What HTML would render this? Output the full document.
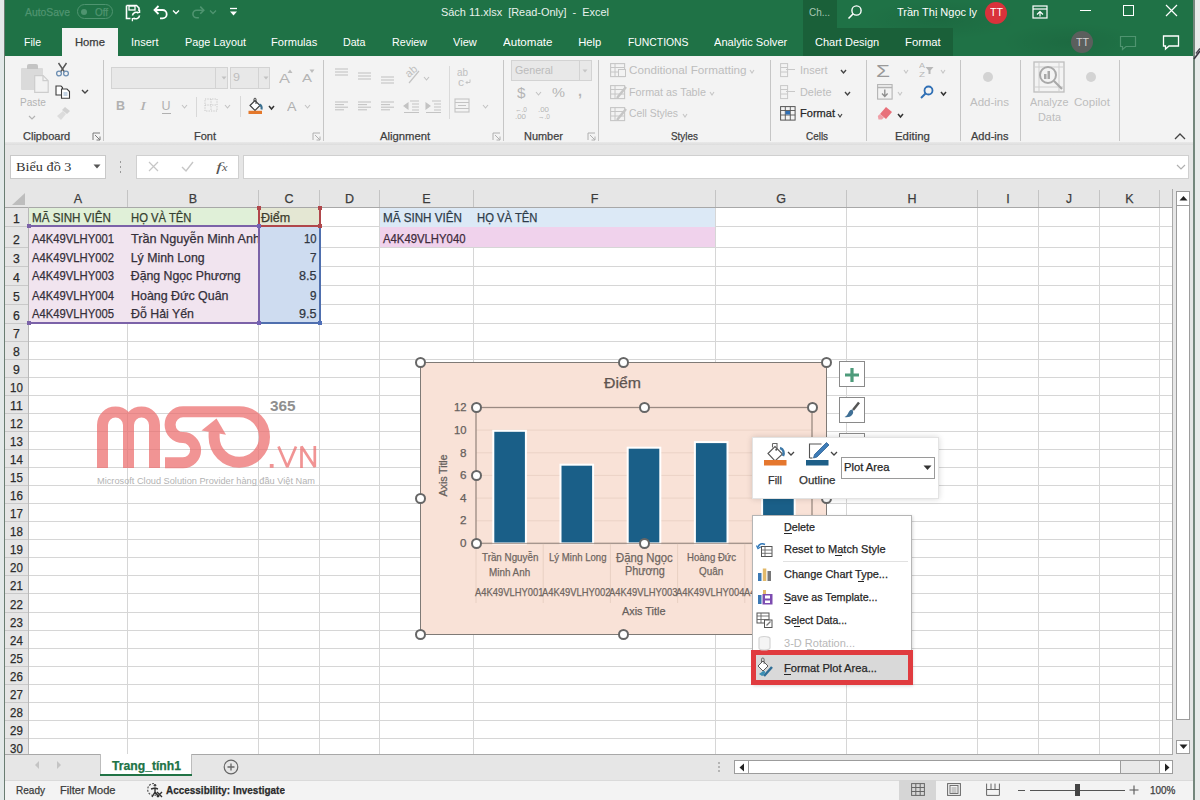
<!DOCTYPE html>
<html><head><meta charset="utf-8">
<style>
*{box-sizing:border-box}
html,body{margin:0;padding:0;width:1200px;height:800px;overflow:hidden;background:#f3f3f3;font-family:"Liberation Sans",sans-serif;color:#262626}
.a{position:absolute}
.t{position:absolute;white-space:nowrap;line-height:1;-webkit-text-stroke:0.25px currentColor}
svg{position:absolute;overflow:visible}
#title{left:5px;top:0;width:1189px;height:56px;background:#1f7246}
.wt{color:#fff;font-size:11.5px}
.rb{font-size:11.3px;color:#a6a6a6}
.gl{font-size:11.3px;color:#3b3b3b}
.sep{position:absolute;width:1px;background:#c8c8c8}
.cell{font-size:13.2px;color:#333;transform-origin:left center}
.hdr{font-size:13px;color:#3a3a3a}
.cm{font-size:11.3px;color:#262626}
</style></head><body>
<div class=a style='left:0;top:0;width:5px;height:800px;background:#e3e9e9'></div>
<div class=a style='left:3.7px;top:0;width:1.4px;height:800px;background:#6a7d72'></div>
<div class=a style='left:1194px;top:0;width:6px;height:800px;background:#e8ebea'></div>
<div class=a style='left:1193px;top:0;width:1.6px;height:800px;background:#74877c'></div>
<div class=a style='left:5px;top:0;width:1188px;height:56px;background:#1f7246'></div>
<div class=a style='left:860px;top:0;width:160px;height:40px;background:radial-gradient(ellipse at center,rgba(0,0,0,.07),rgba(0,0,0,0) 70%)'></div>
<div class=a style='left:1000px;top:22px;width:140px;height:40px;background:radial-gradient(ellipse at center,rgba(0,0,0,.07),rgba(0,0,0,0) 70%)'></div>
<div class=a style='left:803px;top:0;width:34px;height:28px;background:#1a6039'></div>
<div class=a style='left:803px;top:28px;width:150px;height:28px;background:#1a6039'></div>
<div class=t style='left:25.00px;top:6.58px;font-size:11.3px;color:#4f9470;transform:scaleX(0.918);transform-origin:0 0;'>AutoSave</div>
<div class=a style='left:77px;top:4px;width:36px;height:15px;border:1.2px solid #4f9470;border-radius:8px'></div>
<div class=a style='left:81px;top:8.5px;width:6px;height:6px;border-radius:3px;background:#4f9470'></div>
<div class=t style='left:95.00px;top:6.96px;font-size:10.5px;color:#4f9470;transform:scaleX(0.941);transform-origin:0 0;'>Off</div>
<svg style='left:124px;top:3px' width=18 height=18 viewBox='0 0 18 18'>
<path d='M2.5 2.5h10l2.5 2.5v3' fill=none stroke='#fff' stroke-width=1.6 />
<path d='M2.5 2.5v13h4' fill=none stroke='#fff' stroke-width=1.6 />
<rect x=5 y=3 width=6 height=4 fill=none stroke='#fff' stroke-width=1.3 />
<path d='M8.5 12.5a3.5 3.5 0 0 1 6-2.2M15.5 12.5a3.5 3.5 0 0 1-6 2.2' fill=none stroke='#fff' stroke-width=1.6 />
<path d='M13 9.3h2.6V6.8M11 15.7H8.4v2.5' fill=none stroke='#fff' stroke-width=1.3 />
</svg>
<svg style='left:152px;top:4px' width=18 height=16 viewBox='0 0 18 16'>
<path d='M3 6h7.5a4.2 4.2 0 0 1 0 8.4H8' fill=none stroke='#fff' stroke-width=1.8 />
<path d='M6.5 2L2.5 6l4 4' fill=none stroke='#fff' stroke-width=1.8 />
</svg>
<svg style='left:172px;top:9px' width=8 height=6 viewBox='0 0 8 6'><path d='M1 1.5l3 3 3-3' fill=none stroke='#fff' stroke-width=1.3 /></svg>
<svg style='left:190px;top:4px' width=16 height=16 viewBox='0 0 18 16'>
<path d='M15 6H7.5a4.2 4.2 0 0 0 0 8.4H10' fill=none stroke='#4f9470' stroke-width=1.8 />
<path d='M11.5 2l4 4-4 4' fill=none stroke='#4f9470' stroke-width=1.8 />
</svg>
<svg style='left:209px;top:9px' width=8 height=6 viewBox='0 0 8 6'><path d='M1 1.5l3 3 3-3' fill=none stroke='#4f9470' stroke-width=1.3 /></svg>
<svg style='left:229px;top:7px' width=9 height=10 viewBox='0 0 9 10'><path d='M1 1.5h7' stroke='#fff' stroke-width=1.3 /><path d='M1 4.5h7l-3.5 4z' fill='#fff' /></svg>
<div class=t style='left:441.00px;top:7.08px;font-size:11.3px;color:#e8f1ec;transform:scaleX(0.967);transform-origin:0 0;-webkit-text-stroke:0;'>Sách 11.xlsx&nbsp; [Read-Only]&nbsp; -&nbsp; Excel</div>
<div class=t style='left:809.00px;top:7.08px;font-size:11.3px;color:#a9c6b5;transform:scaleX(0.880);transform-origin:0 0;-webkit-text-stroke:0;'>Ch...</div>
<svg style='left:847px;top:4px' width=16 height=16 viewBox='0 0 16 16'><circle cx=9.5 cy=6.5 r=4.6 fill=none stroke='#fff' stroke-width=1.4 /><path d='M6.2 9.8L1.5 14.5' stroke='#fff' stroke-width=1.6 /></svg>
<div class=t style='left:897.00px;top:7.08px;font-size:11.3px;color:#ffffff;transform:scaleX(0.973);transform-origin:0 0;-webkit-text-stroke:0;'>Trần Thị Ngọc ly</div>
<div class=a style='left:985px;top:1.5px;width:22px;height:22px;border-radius:11px;background:#d9323b'></div>
<div class=t style='left:989.50px;top:7.70px;font-size:10px;color:#ffffff;transform:scaleX(1.064);transform-origin:0 0;-webkit-text-stroke:0;'>TT</div>
<svg style='left:1032px;top:5px' width=16 height=14 viewBox='0 0 16 14'><rect x=1 y=1 width=14 height=12 fill=none stroke='#fff' stroke-width=1.2 /><path d='M1 4h14' stroke='#fff' stroke-width=1.2 /><path d='M5 9.5l3-3 3 3M8 6.5v5' fill=none stroke='#fff' stroke-width=1.2 /></svg>
<div class=a style='left:1080px;top:9.5px;width:11px;height:1.2px;background:#fff'></div>
<div class=a style='left:1123px;top:5px;width:11px;height:11px;border:1.2px solid #fff'></div>
<svg style='left:1165px;top:4px' width=13 height=13 viewBox='0 0 13 13'><path d='M1 1l11 11M12 1L1 12' stroke='#fff' stroke-width=1.2 /></svg>
<div class=a style='left:62px;top:28px;width:56px;height:29px;background:#f3f3f3'></div>
<div class=t style='left:24.00px;top:36.92px;font-size:11.2px;color:#ffffff;transform:scaleX(0.943);transform-origin:0 0;-webkit-text-stroke:0;'>File</div>
<div class=t style='left:75.00px;top:36.92px;font-size:11.2px;color:#3b3b3b;transform:scaleX(1.005);transform-origin:0 0;'>Home</div>
<div class=t style='left:131.25px;top:36.92px;font-size:11.2px;color:#ffffff;transform:scaleX(0.983);transform-origin:0 0;-webkit-text-stroke:0;'>Insert</div>
<div class=t style='left:184.50px;top:36.92px;font-size:11.2px;color:#ffffff;transform:scaleX(0.971);transform-origin:0 0;-webkit-text-stroke:0;'>Page Layout</div>
<div class=t style='left:271.25px;top:36.92px;font-size:11.2px;color:#ffffff;transform:scaleX(0.992);transform-origin:0 0;-webkit-text-stroke:0;'>Formulas</div>
<div class=t style='left:343.25px;top:36.92px;font-size:11.2px;color:#ffffff;transform:scaleX(0.952);transform-origin:0 0;-webkit-text-stroke:0;'>Data</div>
<div class=t style='left:392.00px;top:36.92px;font-size:11.2px;color:#ffffff;transform:scaleX(0.954);transform-origin:0 0;-webkit-text-stroke:0;'>Review</div>
<div class=t style='left:452.50px;top:36.92px;font-size:11.2px;color:#ffffff;transform:scaleX(0.988);transform-origin:0 0;-webkit-text-stroke:0;'>View</div>
<div class=t style='left:502.50px;top:36.92px;font-size:11.2px;color:#ffffff;transform:scaleX(1.034);transform-origin:0 0;-webkit-text-stroke:0;'>Automate</div>
<div class=t style='left:578.25px;top:36.92px;font-size:11.2px;color:#ffffff;-webkit-text-stroke:0;'>Help</div>
<div class=t style='left:627.50px;top:36.92px;font-size:11.2px;color:#ffffff;transform:scaleX(0.927);transform-origin:0 0;-webkit-text-stroke:0;'>FUNCTIONS</div>
<div class=t style='left:713.75px;top:36.92px;font-size:11.2px;color:#ffffff;transform:scaleX(0.990);transform-origin:0 0;-webkit-text-stroke:0;'>Analytic Solver</div>
<div class=t style='left:815.00px;top:36.92px;font-size:11.2px;color:#ffffff;transform:scaleX(0.984);transform-origin:0 0;-webkit-text-stroke:0;'>Chart Design</div>
<div class=t style='left:905.00px;top:36.92px;font-size:11.2px;color:#ffffff;transform:scaleX(1.009);transform-origin:0 0;-webkit-text-stroke:0;'>Format</div>
<div class=a style='left:1071px;top:31px;width:22px;height:22px;border-radius:11px;background:#5b5f5d'></div>
<div class=t style='left:1075.50px;top:37.50px;font-size:10px;color:#d0d0d0;transform:scaleX(1.064);transform-origin:0 0;-webkit-text-stroke:0;'>TT</div>
<svg style='left:1119px;top:35px' width=18 height=16 viewBox='0 0 18 16'><path d='M1.5 1.5h15v10H7l-3.5 3v-3h-2z' fill=none stroke='#4f9470' stroke-width=1.2 /></svg>
<svg style='left:1162px;top:34px' width=18 height=17 viewBox='0 0 18 16'><path d='M1.5 1.5h15v10H7l-3.5 3v-3h-2z' fill=none stroke='#fff' stroke-width=1.3 /></svg>
<svg style='left:1193px;top:45px' width=7 height=17 viewBox='0 0 7 17'><path d='M1 14L7 6' stroke='#3a3540' stroke-width=1.6 /><path d='M3 8.5L7 3.5' stroke='#4a4550' stroke-width=1.4 /></svg>
<div class=a style='left:5px;top:56px;width:1188px;height:87px;background:#f3f3f3'></div>
<div class=a style='left:5px;top:142px;width:1188px;height:3px;background:linear-gradient(#e9e9e9,#dcdcdc)'></div>
<div class=a style='left:5px;top:145px;width:1188px;height:44px;background:#e6e6e6'></div>
<div class=sep style='left:103px;top:60px;height:81px;background:#c6c6c6'></div>
<div class=sep style='left:323px;top:60px;height:81px;background:#c6c6c6'></div>
<div class=sep style='left:503px;top:60px;height:81px;background:#c6c6c6'></div>
<div class=sep style='left:598px;top:60px;height:81px;background:#c6c6c6'></div>
<div class=sep style='left:769.5px;top:60px;height:81px;background:#c6c6c6'></div>
<div class=sep style='left:866px;top:60px;height:81px;background:#c6c6c6'></div>
<div class=sep style='left:959.5px;top:60px;height:81px;background:#c6c6c6'></div>
<div class=sep style='left:1019.5px;top:60px;height:81px;background:#c6c6c6'></div>
<div class=sep style='left:1119px;top:60px;height:81px;background:#c6c6c6'></div>
<div class=t style='left:22.50px;top:130.92px;font-size:11.2px;color:#3f3f3f;transform:scaleX(0.986);transform-origin:0 0;'>Clipboard</div>
<div class=t style='left:194.00px;top:130.92px;font-size:11.2px;color:#3f3f3f;transform:scaleX(0.983);transform-origin:0 0;'>Font</div>
<div class=t style='left:380.20px;top:130.92px;font-size:11.2px;color:#3f3f3f;transform:scaleX(1.009);transform-origin:0 0;'>Alignment</div>
<div class=t style='left:523.70px;top:130.92px;font-size:11.2px;color:#3f3f3f;transform:scaleX(0.977);transform-origin:0 0;'>Number</div>
<div class=t style='left:670.80px;top:130.92px;font-size:11.2px;color:#3f3f3f;transform:scaleX(0.883);transform-origin:0 0;'>Styles</div>
<div class=t style='left:806.20px;top:130.92px;font-size:11.2px;color:#3f3f3f;transform:scaleX(0.888);transform-origin:0 0;'>Cells</div>
<div class=t style='left:895.40px;top:130.92px;font-size:11.2px;color:#3f3f3f;transform:scaleX(1.020);transform-origin:0 0;'>Editing</div>
<div class=t style='left:970.50px;top:130.92px;font-size:11.2px;color:#3f3f3f;transform:scaleX(0.986);transform-origin:0 0;'>Add-ins</div>
<svg style='left:91.5px;top:131.5px' width=9 height=9 viewBox='0 0 9 9'><path d='M1 8V1h7' fill=none stroke='#7a7a7a' stroke-width=1 /><path d='M3 3l5 5M4.5 8H8V4.5' fill=none stroke='#7a7a7a' stroke-width=1 /></svg>
<svg style='left:311.5px;top:131.5px' width=9 height=9 viewBox='0 0 9 9'><path d='M1 8V1h7' fill=none stroke='#b0b0b0' stroke-width=1 /><path d='M3 3l5 5M4.5 8H8V4.5' fill=none stroke='#b0b0b0' stroke-width=1 /></svg>
<svg style='left:491.5px;top:131.5px' width=9 height=9 viewBox='0 0 9 9'><path d='M1 8V1h7' fill=none stroke='#b0b0b0' stroke-width=1 /><path d='M3 3l5 5M4.5 8H8V4.5' fill=none stroke='#b0b0b0' stroke-width=1 /></svg>
<svg style='left:586.5px;top:131.5px' width=9 height=9 viewBox='0 0 9 9'><path d='M1 8V1h7' fill=none stroke='#b0b0b0' stroke-width=1 /><path d='M3 3l5 5M4.5 8H8V4.5' fill=none stroke='#b0b0b0' stroke-width=1 /></svg>
<svg style='left:1174px;top:133px' width=12 height=7 viewBox='0 0 12 7'><path d='M1 6l5-5 5 5' fill=none stroke='#444' stroke-width=1.3 /></svg>
<div class=a style='left:21px;top:67.5px;width:22px;height:22px;background:#dadada;border-radius:1px'></div>
<div class=a style='left:27px;top:64px;width:11px;height:5px;background:#c4c4c4;border-radius:2px 2px 0 0'></div>
<svg style='left:33.5px;top:74.5px' width=15 height=18 viewBox='0 0 15 18'><path d='M0.7 0.7h8.5l5 5v11.6H0.7z' fill='#f2f2f2' stroke='#cdcdcd' stroke-width=1.2 /><path d='M9 0.7v5h5' fill=none stroke='#cdcdcd' stroke-width=1.2 /></svg>
<div class=t style='left:19.60px;top:97.38px;font-size:11.3px;color:#b3b3b3;transform:scaleX(0.893);transform-origin:0 0;-webkit-text-stroke:0;'>Paste</div>
<svg style='left:28px;top:115px' width=8 height=5 viewBox='0 0 8 5'><path d='M1 1l3 3 3-3' fill=none stroke='#b3b3b3' stroke-width=1.2 /></svg>
<svg style='left:55px;top:61.5px' width=15 height=15 viewBox='0 0 15 15'><path d='M3.5 1l6 9M11.5 1l-6 9' stroke='#555' stroke-width=1.4 /><circle cx=4 cy=11.5 r=2.4 fill=none stroke='#6d8fb3' stroke-width=1.3 /><circle cx=11 cy=11.5 r=2.4 fill=none stroke='#6d8fb3' stroke-width=1.3 /></svg>
<svg style='left:54.5px;top:84.5px' width=16 height=14 viewBox='0 0 16 14'><path d='M1 1h5l1.5 1.5V10H1z' fill='#fff' stroke='#3c3c3c' stroke-width=1.1 /><path d='M6.5 4h5.5l2.5 2.5V13.3H6.5z' fill='#fff' stroke='#3c3c3c' stroke-width=1.1 /><path d='M8.5 8h4M8.5 10h4' stroke='#7a9cc0' stroke-width=0.9 /></svg>
<svg style='left:80.5px;top:89px' width=8 height=5 viewBox='0 0 8 5'><path d='M1 1l3 3 3-3' fill=none stroke='#444' stroke-width=1.4 /></svg>
<svg style='left:56px;top:106px' width=15 height=14 viewBox='0 0 15 14'><path d='M9 1l5 4-3 3-5-4z' fill='#d2d2d2' /><path d='M7 5l3 3-5 6-4-4z' fill='#dcdcdc' /></svg>
<div class=a style='left:111px;top:67px;width:117px;height:21.5px;background:#e8e8e8;border:1px solid #d3d3d3'></div>
<div class=a style='left:215px;top:68px;width:1px;height:19.5px;background:#d3d3d3'></div>
<div class=a style='left:229.5px;top:67px;width:40.5px;height:21.5px;background:#e8e8e8;border:1px solid #d3d3d3'></div>
<div class=a style='left:257.5px;top:68px;width:1px;height:19.5px;background:#d3d3d3'></div>
<svg style='left:220.5px;top:76px' width=6 height=4 viewBox='0 0 6 4'><path d='M0.5 0.5h5l-2.5 3z' fill='#c2c2c2' /></svg>
<svg style='left:262.5px;top:76px' width=6 height=4 viewBox='0 0 6 4'><path d='M0.5 0.5h5l-2.5 3z' fill='#c2c2c2' /></svg>
<div class=t style='left:232.50px;top:71.98px;font-size:11.5px;color:#bdbdbd;transform:scaleX(1.093);transform-origin:0 0;-webkit-text-stroke:0;'>9</div>
<div class=t style='left:278.50px;top:71.52px;font-size:13.5px;color:#b5b5b5;transform:scaleX(1.220);transform-origin:0 0;-webkit-text-stroke:0;'>A</div>
<div class=t style='left:301.50px;top:72.98px;font-size:11.5px;color:#b5b5b5;transform:scaleX(1.303);transform-origin:0 0;-webkit-text-stroke:0;'>A</div>
<svg style='left:287px;top:68.5px' width=6 height=5 viewBox='0 0 6 5'><path d='M0.5 4h5L3 0.5z' fill='#bdbdbd' /></svg>
<svg style='left:309px;top:69px' width=6 height=5 viewBox='0 0 6 5'><path d='M0.5 0.5h5L3 4z' fill='#bdbdbd' /></svg>
<div class=t style='left:116.00px;top:100.00px;font-size:12.5px;color:#b0b0b0;font-weight:700;-webkit-text-stroke:0;'>B</div>
<div class=t style='left:139.50px;top:100.00px;font-size:12.5px;color:#b0b0b0;font-style:italic;font-family:"Liberation Serif";transform:scaleX(1.438);transform-origin:0 0;-webkit-text-stroke:0;'>I</div>
<div class=t style='left:161.50px;top:99.50px;font-size:12.5px;color:#b0b0b0;-webkit-text-stroke:0;'>U</div>
<div class=a style='left:161.5px;top:113px;width:9px;height:1px;background:#b0b0b0'></div>
<svg style='left:180.5px;top:104px' width=7 height=5 viewBox='0 0 7 5'><path d='M1 1l2.5 3 2.5-3' fill=none stroke='#c2c2c2' stroke-width=1.1 /></svg>
<div class=sep style='left:196px;top:97px;height:20px;background:#d8d8d8'></div>
<svg style='left:204px;top:98px' width=14 height=14 viewBox='0 0 14 14'><rect x=1 y=1 width=12 height=12 fill=none stroke='#c6c6c6' stroke-width=1 stroke-dasharray='1.2 1.2' /><path d='M7 1v12M1 7h12' stroke='#c6c6c6' stroke-width=1 stroke-dasharray='1.2 1.2' /></svg>
<svg style='left:223.5px;top:104px' width=7 height=5 viewBox='0 0 7 5'><path d='M1 1l2.5 3 2.5-3' fill=none stroke='#c2c2c2' stroke-width=1.1 /></svg>
<div class=sep style='left:239.5px;top:96px;height:21px;background:#d8d8d8'></div>
<svg style='left:247px;top:98px' width=16 height=17 viewBox='0 0 16 17'><path d='M3 7.5l5-5 5 5-5 5z' fill='#fff' stroke='#3c3c3c' stroke-width=1.1 /><path d='M7 3.5V1.2a1 1 0 0 1 2 0V6' fill=none stroke='#3c3c3c' stroke-width=1 /><path d='M12.5 6.5c2 1 2.5 3 2 5' fill=none stroke='#3b6f8f' stroke-width=2 /><rect x=1.5 y=12.8 width=13.5 height=3.2 fill='#e4782b' /></svg>
<svg style='left:267.5px;top:105px' width=7 height=5 viewBox='0 0 7 5'><path d='M1 1l2.5 3 2.5-3' fill=none stroke='#333' stroke-width=1.5 /></svg>
<div class=t style='left:287.00px;top:99.76px;font-size:13px;color:#b0b0b0;transform:scaleX(1.095);transform-origin:0 0;-webkit-text-stroke:0;'>A</div>
<svg style='left:303.5px;top:104px' width=7 height=5 viewBox='0 0 7 5'><path d='M1 1l2.5 3 2.5-3' fill=none stroke='#c2c2c2' stroke-width=1.1 /></svg>
<svg style='left:334.5px;top:68px' width=14 height=11 viewBox='0 0 14 11'><path d='M0 1h13' stroke='#c3c3c3' stroke-width=1.1 /><path d='M0 4h13' stroke='#c3c3c3' stroke-width=1.1 /><path d='M0 7h13' stroke='#c3c3c3' stroke-width=1.1 /></svg>
<svg style='left:357.5px;top:72px' width=14 height=11 viewBox='0 0 14 11'><path d='M0 1h13' stroke='#c3c3c3' stroke-width=1.1 /><path d='M0 4h13' stroke='#c3c3c3' stroke-width=1.1 /><path d='M0 7h13' stroke='#c3c3c3' stroke-width=1.1 /></svg>
<svg style='left:380.5px;top:76px' width=14 height=11 viewBox='0 0 14 11'><path d='M0 1h13' stroke='#c3c3c3' stroke-width=1.1 /><path d='M0 4h13' stroke='#c3c3c3' stroke-width=1.1 /><path d='M0 7h13' stroke='#c3c3c3' stroke-width=1.1 /></svg>
<div class=t style='left:403.00px;top:70.72px;font-size:11px;color:#c0c0c0;transform:scaleX(0.898);transform-origin:0 0;-webkit-text-stroke:0;transform:rotate(-40deg) scaleX(1);'>ab</div>
<svg style='left:405px;top:69px' width=16 height=16 viewBox='0 0 16 16'><path d='M14 2L4 14' stroke='#c3c3c3' stroke-width=1.2 /></svg>
<svg style='left:423px;top:76px' width=7 height=5 viewBox='0 0 7 5'><path d='M1 1l2.5 3 2.5-3' fill=none stroke='#c2c2c2' stroke-width=1.1 /></svg>
<svg style='left:334.5px;top:101px' width=14 height=12.4 viewBox='0 0 14 12.4'><path d='M0 1.0h13' stroke='#c3c3c3' stroke-width=1.1 /><path d='M0 3.6h9' stroke='#c3c3c3' stroke-width=1.1 /><path d='M0 6.2h13' stroke='#c3c3c3' stroke-width=1.1 /><path d='M0 8.8h9' stroke='#c3c3c3' stroke-width=1.1 /></svg>
<svg style='left:357.5px;top:101px' width=14 height=12.4 viewBox='0 0 14 12.4'><path d='M0 1.0h13' stroke='#c3c3c3' stroke-width=1.1 /><path d='M0 3.6h9' stroke='#c3c3c3' stroke-width=1.1 /><path d='M0 6.2h13' stroke='#c3c3c3' stroke-width=1.1 /><path d='M0 8.8h9' stroke='#c3c3c3' stroke-width=1.1 /></svg>
<svg style='left:380.5px;top:101px' width=14 height=12.4 viewBox='0 0 14 12.4'><path d='M0 1.0h13' stroke='#c3c3c3' stroke-width=1.1 /><path d='M0 3.6h9' stroke='#c3c3c3' stroke-width=1.1 /><path d='M0 6.2h13' stroke='#c3c3c3' stroke-width=1.1 /><path d='M0 8.8h9' stroke='#c3c3c3' stroke-width=1.1 /></svg>
<svg style='left:403px;top:100px' width=16 height=13 viewBox='0 0 16 13'><path d='M7 1h9M9 4h7M9 7h7M9 10h7M1 12.5h15M1 6l4-3v6z' stroke='#c3c3c3' stroke-width=1.1 fill='#c3c3c3' /></svg>
<svg style='left:425px;top:100px' width=16 height=13 viewBox='0 0 16 13'><path d='M7 1h9M9 4h7M9 7h7M9 10h7M1 12.5h15M5 6L1 3v6z' stroke='#c3c3c3' stroke-width=1.1 fill='#c3c3c3' /></svg>
<div class=sep style='left:448.5px;top:66px;height:53px;background:#dadada'></div>
<div class=t style='left:456.50px;top:67.46px;font-size:10.5px;color:#c0c0c0;transform:scaleX(0.941);transform-origin:0 0;-webkit-text-stroke:0;'>ab</div>
<div class=t style='left:458.00px;top:76.96px;font-size:10.5px;color:#c0c0c0;transform:scaleX(1.143);transform-origin:0 0;-webkit-text-stroke:0;'>c</div>
<svg style='left:465px;top:79px' width=6 height=6 viewBox='0 0 6 6'><path d='M5 0.5v3H1M2.5 2l-1.5 1.5 1.5 1.5' fill=none stroke='#c0c0c0' stroke-width=0.9 /></svg>
<svg style='left:454px;top:98px' width=16 height=15 viewBox='0 0 16 15'><rect x=1 y=1 width=14 height=13 fill=none stroke='#c3c3c3' stroke-width=1.1 /><path d='M1 4.5h14M1 10.5h14M4 7.5h8' stroke='#c3c3c3' stroke-width=1.1 /></svg>
<svg style='left:481.5px;top:104px' width=7 height=5 viewBox='0 0 7 5'><path d='M1 1l2.5 3 2.5-3' fill=none stroke='#c2c2c2' stroke-width=1.1 /></svg>
<div class=a style='left:511px;top:59.5px;width:80.5px;height:21px;background:#e8e8e8;border:1px solid #d3d3d3'></div>
<div class=a style='left:578.5px;top:60.5px;width:1px;height:19px;background:#d3d3d3'></div>
<svg style='left:582px;top:68.5px' width=6 height=4 viewBox='0 0 6 4'><path d='M0.5 0.5h5l-2.5 3z' fill='#c6c6c6' /></svg>
<div class=t style='left:514.50px;top:65.08px;font-size:11.3px;color:#bcbcbc;transform:scaleX(0.945);transform-origin:0 0;-webkit-text-stroke:0;'>General</div>
<div class=t style='left:516.50px;top:85.78px;font-size:14px;color:#b5b5b5;transform:scaleX(1.090);transform-origin:0 0;-webkit-text-stroke:0;'>$</div>
<svg style='left:534.5px;top:91px' width=7 height=5 viewBox='0 0 7 5'><path d='M1 1l2.5 3 2.5-3' fill=none stroke='#c2c2c2' stroke-width=1.1 /></svg>
<div class=t style='left:552.00px;top:86.02px;font-size:13.5px;color:#b5b5b5;transform:scaleX(1.082);transform-origin:0 0;-webkit-text-stroke:0;'>%</div>
<div class=t style='left:578.00px;top:84.28px;font-size:14px;color:#b5b5b5;font-weight:700;transform:scaleX(1.028);transform-origin:0 0;-webkit-text-stroke:0;'>,</div>
<div class=t style='left:514.50px;top:106.40px;font-size:7.5px;color:#b5b5b5;transform:scaleX(0.872);transform-origin:0 0;-webkit-text-stroke:0;'>←.0</div>
<div class=t style='left:515.00px;top:113.40px;font-size:7.5px;color:#b5b5b5;transform:scaleX(1.054);transform-origin:0 0;-webkit-text-stroke:0;'>.00</div>
<div class=t style='left:538.00px;top:106.40px;font-size:7.5px;color:#b5b5b5;transform:scaleX(1.054);transform-origin:0 0;-webkit-text-stroke:0;'>.00</div>
<div class=t style='left:537.50px;top:113.40px;font-size:7.5px;color:#b5b5b5;transform:scaleX(0.872);transform-origin:0 0;-webkit-text-stroke:0;'>→.0</div>
<svg style='left:609.5px;top:62.5px' width=16 height=15 viewBox='0 0 16 15'><rect x=0.6 y=0.6 width=14 height=13 fill=none stroke='#c6c6c6' stroke-width=1.1 /><path d='M0.6 4.5h14M0.6 9h14M5 0.6v13' stroke='#c6c6c6' stroke-width=1 /></svg>
<div class=a style='left:618px;top:69px;width:8px;height:8px;background:#f3f3f3;border:1px solid #c6c6c6'></div>
<svg style='left:609.5px;top:84.5px' width=16 height=15 viewBox='0 0 16 15'><rect x=0.6 y=0.6 width=14 height=13 fill=none stroke='#c6c6c6' stroke-width=1.1 /><path d='M0.6 4.5h14M0.6 9h14M5 0.6v13' stroke='#c6c6c6' stroke-width=1 /></svg>
<svg style='left:614px;top:86px' width=13 height=14 viewBox='0 0 13 14'><path d='M12 1L3 12' stroke='#c6c6c6' stroke-width=2.5 /></svg>
<svg style='left:609.5px;top:106.5px' width=16 height=15 viewBox='0 0 16 15'><rect x=0.6 y=0.6 width=14 height=13 fill=none stroke='#c6c6c6' stroke-width=1.1 /><path d='M0.6 4.5h14M0.6 9h14M5 0.6v13' stroke='#c6c6c6' stroke-width=1 /></svg>
<svg style='left:614px;top:108px' width=13 height=14 viewBox='0 0 13 14'><path d='M12 1L3 12' stroke='#c6c6c6' stroke-width=2.5 /></svg>
<div class=t style='left:628.50px;top:64.98px;font-size:11.5px;color:#bdbdbd;transform:scaleX(1.016);transform-origin:0 0;-webkit-text-stroke:0;'>Conditional Formatting</div>
<svg style='left:748.5px;top:69px' width=6 height=5 viewBox='0 0 6 5'><path d='M1 1l2.0 3 2.0-3' fill=none stroke='#c6c6c6' stroke-width=1.1 /></svg>
<div class=t style='left:628.80px;top:86.98px;font-size:11.5px;color:#bdbdbd;transform:scaleX(0.936);transform-origin:0 0;-webkit-text-stroke:0;'>Format as Table</div>
<svg style='left:709px;top:91px' width=6 height=5 viewBox='0 0 6 5'><path d='M1 1l2.0 3 2.0-3' fill=none stroke='#c6c6c6' stroke-width=1.1 /></svg>
<div class=t style='left:628.80px;top:108.48px;font-size:11.5px;color:#bdbdbd;transform:scaleX(0.902);transform-origin:0 0;-webkit-text-stroke:0;'>Cell Styles</div>
<svg style='left:681.5px;top:112.5px' width=6 height=5 viewBox='0 0 6 5'><path d='M1 1l2.0 3 2.0-3' fill=none stroke='#c6c6c6' stroke-width=1.1 /></svg>
<svg style='left:780px;top:62.5px' width=16 height=15 viewBox='0 0 16 15'><rect x=0.6 y=0.6 width=7 height=13 fill=none stroke='#c8c8c8' stroke-width=1 /><path d='M0.6 4.5h7M0.6 9h7M6 6.5h9' stroke='#c8c8c8' stroke-width=1 /></svg>
<svg style='left:780px;top:84.5px' width=16 height=15 viewBox='0 0 16 15'><rect x=0.6 y=0.6 width=7 height=13 fill=none stroke='#c8c8c8' stroke-width=1 /><path d='M0.6 4.5h7M0.6 9h7M6 6.5h9' stroke='#c8c8c8' stroke-width=1 /></svg>
<div class=t style='left:799.50px;top:64.98px;font-size:11.5px;color:#bdbdbd;transform:scaleX(0.956);transform-origin:0 0;-webkit-text-stroke:0;'>Insert</div>
<svg style='left:839.5px;top:68.5px' width=7 height=5 viewBox='0 0 7 5'><path d='M1 1l2.5 3 2.5-3' fill=none stroke='#444' stroke-width=1.4 /></svg>
<div class=t style='left:799.50px;top:86.98px;font-size:11.5px;color:#bdbdbd;transform:scaleX(0.947);transform-origin:0 0;-webkit-text-stroke:0;'>Delete</div>
<svg style='left:843.5px;top:90.5px' width=7 height=5 viewBox='0 0 7 5'><path d='M1 1l2.5 3 2.5-3' fill=none stroke='#444' stroke-width=1.4 /></svg>
<svg style='left:780px;top:105px' width=16 height=16 viewBox='0 0 16 16'><rect x=0.6 y=1.6 width=14.5 height=13.5 fill=none stroke='#555' stroke-width=1 /><path d='M0.6 5.5h14.5M0.6 10h14.5M5.3 1.6v13.5M10.3 1.6v13.5' stroke='#555' stroke-width=0.9 /><rect x=5.5 y=6 width=4.5 height=3.5 fill='#2f6fb5' /></svg>
<div class=t style='left:799.50px;top:108.48px;font-size:11.5px;color:#262626;transform:scaleX(0.961);transform-origin:0 0;'>Format</div>
<svg style='left:837px;top:112.5px' width=6 height=5 viewBox='0 0 6 5'><path d='M1 1l2.0 3 2.0-3' fill=none stroke='#444' stroke-width=1.2 /></svg>
<div class=t style='left:876.00px;top:63.34px;font-size:17px;color:#9a9a9a;transform:scaleX(1.331);transform-origin:0 0;-webkit-text-stroke:0;'>Σ</div>
<svg style='left:903px;top:69px' width=6 height=5 viewBox='0 0 6 5'><path d='M1 1l2.0 3 2.0-3' fill=none stroke='#c6c6c6' stroke-width=1.1 /></svg>
<div class=t style='left:918.50px;top:62.40px;font-size:7.5px;color:#b8b8b8;transform:scaleX(1.196);transform-origin:0 0;-webkit-text-stroke:0;'>A</div>
<div class=t style='left:918.50px;top:70.90px;font-size:7.5px;color:#b8b8b8;transform:scaleX(1.306);transform-origin:0 0;-webkit-text-stroke:0;'>Z</div>
<svg style='left:925px;top:66px' width=9 height=9 viewBox='0 0 9 9'><path d='M0.5 1h8L5.5 4.5V8h-2V4.5z' fill='#b8b8b8' /></svg>
<svg style='left:940px;top:69px' width=6 height=5 viewBox='0 0 6 5'><path d='M1 1l2.0 3 2.0-3' fill=none stroke='#c6c6c6' stroke-width=1.1 /></svg>
<svg style='left:877px;top:84px' width=16 height=16 viewBox='0 0 16 16'><rect x=0.6 y=0.6 width=14.5 height=14.5 fill=none stroke='#b3b3b3' stroke-width=1.1 /><path d='M0.6 3.5h14.5' stroke='#b3b3b3' stroke-width=1.5 /><path d='M7.8 5.5v7M5 9.5l2.8 3 2.8-3' fill=none stroke='#8d8d8d' stroke-width=1.3 /></svg>
<svg style='left:897px;top:91px' width=6 height=5 viewBox='0 0 6 5'><path d='M1 1l2.0 3 2.0-3' fill=none stroke='#c6c6c6' stroke-width=1.1 /></svg>
<svg style='left:920px;top:85px' width=14 height=14 viewBox='0 0 14 14'><circle cx=8.5 cy=5.5 r=4 fill=none stroke='#2f6fb5' stroke-width=1.8 /><path d='M5.5 8.5L1 13' stroke='#2f6fb5' stroke-width=2 /></svg>
<svg style='left:939.5px;top:91px' width=7 height=5 viewBox='0 0 7 5'><path d='M1 1l2.5 3 2.5-3' fill=none stroke='#333' stroke-width=1.5 /></svg>
<svg style='left:877px;top:106px' width=16 height=14 viewBox='0 0 16 14'><path d='M9 1l6 5-6 7-6-5z' fill='#e8707a' /><path d='M3 8l4 3.5-2 2H1.5L0.8 10z' fill='#f0a0a8' /></svg>
<svg style='left:897px;top:112.5px' width=7 height=5 viewBox='0 0 7 5'><path d='M1 1l2.5 3 2.5-3' fill=none stroke='#333' stroke-width=1.5 /></svg>
<div class=a style='left:983px;top:72px;width:10px;height:10px;border-radius:5px;background:#d3d3d3'></div>
<div class=t style='left:970.00px;top:97.48px;font-size:11.5px;color:#bdbdbd;-webkit-text-stroke:0;'>Add-ins</div>
<svg style='left:1033px;top:61px' width=32 height=32 viewBox='0 0 32 32'><rect x=1 y=1 width=30 height=30 fill='#f3f3f3' stroke='#bdbdbd' stroke-width=1.3 /><path d='M1 6h30M1 26h30M6 1v30M26 1v30' stroke='#cfcfcf' stroke-width=1 /><circle cx=15 cy=14 r=8 fill='#f3f3f3' stroke='#a9a9a9' stroke-width=2 /><rect x=11 y=13 width=2.5 height=5 fill='#a9a9a9' /><rect x=14.5 y=10 width=2.5 height=8 fill='#a9a9a9' /><path d='M21 20l8 8' stroke='#a9a9a9' stroke-width=2.2 /></svg>
<div class=t style='left:1029.50px;top:97.48px;font-size:11.5px;color:#bdbdbd;transform:scaleX(0.941);transform-origin:0 0;-webkit-text-stroke:0;'>Analyze</div>
<div class=t style='left:1037.50px;top:112.48px;font-size:11.5px;color:#bdbdbd;transform:scaleX(0.947);transform-origin:0 0;-webkit-text-stroke:0;'>Data</div>
<div class=a style='left:1086px;top:72px;width:10px;height:10px;border-radius:5px;background:#d3d3d3'></div>
<div class=t style='left:1074.00px;top:97.48px;font-size:11.5px;color:#bdbdbd;transform:scaleX(1.005);transform-origin:0 0;-webkit-text-stroke:0;'>Copilot</div>
<div class=a style='left:10px;top:154.5px;width:95.5px;height:24.5px;background:#fff;border:1px solid #c9c9c9'></div>
<div class=t style='left:15.80px;top:160.02px;font-size:13.5px;color:#333;font-family:"Liberation Serif";transform:scaleX(1.057);transform-origin:0 0;-webkit-text-stroke:0;'>Biểu đồ 3</div>
<svg style='left:93px;top:163.5px' width=8 height=5 viewBox='0 0 8 5'><path d='M0.5 0.5h7L4 4.5z' fill='#555' /></svg>
<div class=a style='left:119.5px;top:161px;width:1.5px;height:1.5px;background:#9a9a9a'></div>
<div class=a style='left:119.5px;top:166px;width:1.5px;height:1.5px;background:#9a9a9a'></div>
<div class=a style='left:119.5px;top:171px;width:1.5px;height:1.5px;background:#9a9a9a'></div>
<div class=a style='left:135.5px;top:154.5px;width:103px;height:24.5px;background:#fff;border:1px solid #d0d0d0'></div>
<svg style='left:147.5px;top:161px' width=11 height=11 viewBox='0 0 11 11'><path d='M1 1l9 9M10 1L1 10' stroke='#c6c6c6' stroke-width=1.2 /></svg>
<svg style='left:181px;top:161px' width=13 height=11 viewBox='0 0 13 11'><path d='M1 6l4 4 7-9' fill=none stroke='#c6c6c6' stroke-width=1.4 /></svg>
<div class=t style='left:216.00px;top:160.26px;font-size:13px;color:#555;font-style:italic;font-family:"Liberation Serif";transform:scaleX(1.655);transform-origin:0 0;-webkit-text-stroke:0;'>f</div>
<div class=t style='left:221.50px;top:163.94px;font-size:9.5px;color:#555;font-style:italic;font-family:"Liberation Serif";transform:scaleX(1.304);transform-origin:0 0;-webkit-text-stroke:0;'>x</div>
<div class=a style='left:242.5px;top:154.5px;width:946px;height:24.5px;background:#fff;border:1px solid #d0d0d0'></div>
<svg style='left:1176px;top:164px' width=10 height=6 viewBox='0 0 10 6'><path d='M1 1l4 4 4-4' fill=none stroke='#b0b0b0' stroke-width=1.2 /></svg>
<div class=a style='left:5px;top:189px;width:1188px;height:565px;background:#fff'></div>
<div class=a style='left:5px;top:189px;width:1168px;height:18px;background:#e6e6e6'></div>
<div class=a style='left:5px;top:207px;width:23px;height:547px;background:#e6e6e6'></div>
<svg style='left:10px;top:192px' width=16 height=14 viewBox='0 0 16 14'><path d='M15 1v12H2z' fill='#bdbdbd' /></svg>
<svg style='left:0;top:0' width=1200 height=800 viewBox='0 0 1200 800'><path d='M28 226.5H1173' stroke='#d6d6d6' stroke-width=1 /><path d='M28 247.5H1173' stroke='#d6d6d6' stroke-width=1 /><path d='M28 266.5H1173' stroke='#d6d6d6' stroke-width=1 /><path d='M28 285.5H1173' stroke='#d6d6d6' stroke-width=1 /><path d='M28 304.5H1173' stroke='#d6d6d6' stroke-width=1 /><path d='M28 323.5H1173' stroke='#d6d6d6' stroke-width=1 /><path d='M28 341.5H1173' stroke='#d6d6d6' stroke-width=1 /><path d='M28 359.5H1173' stroke='#d6d6d6' stroke-width=1 /><path d='M28 377.5H1173' stroke='#d6d6d6' stroke-width=1 /><path d='M28 395.5H1173' stroke='#d6d6d6' stroke-width=1 /><path d='M28 413.5H1173' stroke='#d6d6d6' stroke-width=1 /><path d='M28 431.5H1173' stroke='#d6d6d6' stroke-width=1 /><path d='M28 449.5H1173' stroke='#d6d6d6' stroke-width=1 /><path d='M28 467.5H1173' stroke='#d6d6d6' stroke-width=1 /><path d='M28 485.5H1173' stroke='#d6d6d6' stroke-width=1 /><path d='M28 503.5H1173' stroke='#d6d6d6' stroke-width=1 /><path d='M28 521.5H1173' stroke='#d6d6d6' stroke-width=1 /><path d='M28 539.5H1173' stroke='#d6d6d6' stroke-width=1 /><path d='M28 557.5H1173' stroke='#d6d6d6' stroke-width=1 /><path d='M28 575.5H1173' stroke='#d6d6d6' stroke-width=1 /><path d='M28 593.5H1173' stroke='#d6d6d6' stroke-width=1 /><path d='M28 612.5H1173' stroke='#d6d6d6' stroke-width=1 /><path d='M28 630.5H1173' stroke='#d6d6d6' stroke-width=1 /><path d='M28 648.5H1173' stroke='#d6d6d6' stroke-width=1 /><path d='M28 666.5H1173' stroke='#d6d6d6' stroke-width=1 /><path d='M28 684.5H1173' stroke='#d6d6d6' stroke-width=1 /><path d='M28 702.5H1173' stroke='#d6d6d6' stroke-width=1 /><path d='M28 720.5H1173' stroke='#d6d6d6' stroke-width=1 /><path d='M28 738.5H1173' stroke='#d6d6d6' stroke-width=1 /><path d='M127.5 207V754' stroke='#d6d6d6' stroke-width=1 /><path d='M258.5 207V754' stroke='#d6d6d6' stroke-width=1 /><path d='M319.5 207V754' stroke='#d6d6d6' stroke-width=1 /><path d='M379.5 207V754' stroke='#d6d6d6' stroke-width=1 /><path d='M473.5 207V754' stroke='#d6d6d6' stroke-width=1 /><path d='M715.5 207V754' stroke='#d6d6d6' stroke-width=1 /><path d='M846.5 207V754' stroke='#d6d6d6' stroke-width=1 /><path d='M977.5 207V754' stroke='#d6d6d6' stroke-width=1 /><path d='M1038.5 207V754' stroke='#d6d6d6' stroke-width=1 /><path d='M1099.5 207V754' stroke='#d6d6d6' stroke-width=1 /><path d='M1159.5 207V754' stroke='#d6d6d6' stroke-width=1 /></svg>
<div class=a style='left:29px;top:208px;width:229px;height:18px;background:#e0f0d8'></div>
<div class=a style='left:259px;top:208px;width:60px;height:18px;background:#e4e7d3'></div>
<div class=a style='left:29px;top:227px;width:229px;height:96px;background:#f1e4ef'></div>
<div class=a style='left:259px;top:227px;width:60px;height:96px;background:#cedcf0'></div>
<div class=a style='left:380px;top:208px;width:335px;height:19px;background:#dce9f6'></div>
<div class=a style='left:380px;top:227px;width:335px;height:20px;background:#f0d2ec'></div>
<svg style='left:0;top:0' width=1200 height=800 viewBox='0 0 1200 800'><path d='M127.5 190V207' stroke='#c4c4c4' stroke-width=1 /><path d='M258.5 190V207' stroke='#c4c4c4' stroke-width=1 /><path d='M319.5 190V207' stroke='#c4c4c4' stroke-width=1 /><path d='M379.5 190V207' stroke='#c4c4c4' stroke-width=1 /><path d='M473.5 190V207' stroke='#c4c4c4' stroke-width=1 /><path d='M715.5 190V207' stroke='#c4c4c4' stroke-width=1 /><path d='M846.5 190V207' stroke='#c4c4c4' stroke-width=1 /><path d='M977.5 190V207' stroke='#c4c4c4' stroke-width=1 /><path d='M1038.5 190V207' stroke='#c4c4c4' stroke-width=1 /><path d='M1099.5 190V207' stroke='#c4c4c4' stroke-width=1 /><path d='M1159.5 190V207' stroke='#c4c4c4' stroke-width=1 /><path d='M5 226.5H28' stroke='#c9c9c9' stroke-width=1 /><path d='M5 247.5H28' stroke='#c9c9c9' stroke-width=1 /><path d='M5 266.5H28' stroke='#c9c9c9' stroke-width=1 /><path d='M5 285.5H28' stroke='#c9c9c9' stroke-width=1 /><path d='M5 304.5H28' stroke='#c9c9c9' stroke-width=1 /><path d='M5 323.5H28' stroke='#c9c9c9' stroke-width=1 /><path d='M5 341.5H28' stroke='#c9c9c9' stroke-width=1 /><path d='M5 359.5H28' stroke='#c9c9c9' stroke-width=1 /><path d='M5 377.5H28' stroke='#c9c9c9' stroke-width=1 /><path d='M5 395.5H28' stroke='#c9c9c9' stroke-width=1 /><path d='M5 413.5H28' stroke='#c9c9c9' stroke-width=1 /><path d='M5 431.5H28' stroke='#c9c9c9' stroke-width=1 /><path d='M5 449.5H28' stroke='#c9c9c9' stroke-width=1 /><path d='M5 467.5H28' stroke='#c9c9c9' stroke-width=1 /><path d='M5 485.5H28' stroke='#c9c9c9' stroke-width=1 /><path d='M5 503.5H28' stroke='#c9c9c9' stroke-width=1 /><path d='M5 521.5H28' stroke='#c9c9c9' stroke-width=1 /><path d='M5 539.5H28' stroke='#c9c9c9' stroke-width=1 /><path d='M5 557.5H28' stroke='#c9c9c9' stroke-width=1 /><path d='M5 575.5H28' stroke='#c9c9c9' stroke-width=1 /><path d='M5 593.5H28' stroke='#c9c9c9' stroke-width=1 /><path d='M5 612.5H28' stroke='#c9c9c9' stroke-width=1 /><path d='M5 630.5H28' stroke='#c9c9c9' stroke-width=1 /><path d='M5 648.5H28' stroke='#c9c9c9' stroke-width=1 /><path d='M5 666.5H28' stroke='#c9c9c9' stroke-width=1 /><path d='M5 684.5H28' stroke='#c9c9c9' stroke-width=1 /><path d='M5 702.5H28' stroke='#c9c9c9' stroke-width=1 /><path d='M5 720.5H28' stroke='#c9c9c9' stroke-width=1 /><path d='M5 738.5H28' stroke='#c9c9c9' stroke-width=1 /><path d='M5 207.5H1173' stroke='#a8a8a8' stroke-width=1 /><path d='M28.5 207V754' stroke='#b8b8b8' stroke-width=1 /><path d='M1172.5 189V754' stroke='#a9a9a9' stroke-width=1 /></svg>
<div class=t style='left:73.83px;top:192.50px;font-size:12.5px;color:#3c3c3c;'>A</div>
<div class=t style='left:188.83px;top:192.50px;font-size:12.5px;color:#3c3c3c;'>B</div>
<div class=t style='left:284.48px;top:192.50px;font-size:12.5px;color:#3c3c3c;'>C</div>
<div class=t style='left:344.98px;top:192.50px;font-size:12.5px;color:#3c3c3c;'>D</div>
<div class=t style='left:422.33px;top:192.50px;font-size:12.5px;color:#3c3c3c;'>E</div>
<div class=t style='left:590.68px;top:192.50px;font-size:12.5px;color:#3c3c3c;'>F</div>
<div class=t style='left:776.13px;top:192.50px;font-size:12.5px;color:#3c3c3c;'>G</div>
<div class=t style='left:907.48px;top:192.50px;font-size:12.5px;color:#3c3c3c;'>H</div>
<div class=t style='left:1006.25px;top:192.50px;font-size:12.5px;color:#3c3c3c;'>I</div>
<div class=t style='left:1066.00px;top:192.50px;font-size:12.5px;color:#3c3c3c;transform:scaleX(0.960);transform-origin:0 0;'>J</div>
<div class=t style='left:1125.33px;top:192.50px;font-size:12.5px;color:#3c3c3c;'>K</div>
<div class=t style='left:13.10px;top:211.66px;font-size:13px;color:#2b2b2b;transform:scaleX(0.940);transform-origin:0 0;'>1</div>
<div class=t style='left:13.10px;top:232.66px;font-size:13px;color:#2b2b2b;transform:scaleX(0.940);transform-origin:0 0;'>2</div>
<div class=t style='left:13.10px;top:251.66px;font-size:13px;color:#2b2b2b;transform:scaleX(0.940);transform-origin:0 0;'>3</div>
<div class=t style='left:13.10px;top:270.66px;font-size:13px;color:#2b2b2b;transform:scaleX(0.940);transform-origin:0 0;'>4</div>
<div class=t style='left:13.10px;top:289.66px;font-size:13px;color:#2b2b2b;transform:scaleX(0.940);transform-origin:0 0;'>5</div>
<div class=t style='left:13.10px;top:308.66px;font-size:13px;color:#2b2b2b;transform:scaleX(0.940);transform-origin:0 0;'>6</div>
<div class=t style='left:13.10px;top:326.66px;font-size:13px;color:#2b2b2b;transform:scaleX(0.940);transform-origin:0 0;'>7</div>
<div class=t style='left:13.10px;top:344.66px;font-size:13px;color:#2b2b2b;transform:scaleX(0.940);transform-origin:0 0;'>8</div>
<div class=t style='left:13.10px;top:362.66px;font-size:13px;color:#2b2b2b;transform:scaleX(0.940);transform-origin:0 0;'>9</div>
<div class=t style='left:10.10px;top:380.66px;font-size:13px;color:#2b2b2b;transform:scaleX(0.885);transform-origin:0 0;'>10</div>
<div class=t style='left:10.10px;top:398.66px;font-size:13px;color:#2b2b2b;transform:scaleX(0.948);transform-origin:0 0;'>11</div>
<div class=t style='left:10.10px;top:416.66px;font-size:13px;color:#2b2b2b;transform:scaleX(0.885);transform-origin:0 0;'>12</div>
<div class=t style='left:10.10px;top:434.66px;font-size:13px;color:#2b2b2b;transform:scaleX(0.885);transform-origin:0 0;'>13</div>
<div class=t style='left:10.10px;top:452.66px;font-size:13px;color:#2b2b2b;transform:scaleX(0.885);transform-origin:0 0;'>14</div>
<div class=t style='left:10.10px;top:470.66px;font-size:13px;color:#2b2b2b;transform:scaleX(0.885);transform-origin:0 0;'>15</div>
<div class=t style='left:10.10px;top:488.66px;font-size:13px;color:#2b2b2b;transform:scaleX(0.885);transform-origin:0 0;'>16</div>
<div class=t style='left:10.10px;top:506.66px;font-size:13px;color:#2b2b2b;transform:scaleX(0.885);transform-origin:0 0;'>17</div>
<div class=t style='left:10.10px;top:524.66px;font-size:13px;color:#2b2b2b;transform:scaleX(0.885);transform-origin:0 0;'>18</div>
<div class=t style='left:10.10px;top:542.66px;font-size:13px;color:#2b2b2b;transform:scaleX(0.885);transform-origin:0 0;'>19</div>
<div class=t style='left:10.10px;top:560.66px;font-size:13px;color:#2b2b2b;transform:scaleX(0.885);transform-origin:0 0;'>20</div>
<div class=t style='left:10.10px;top:578.66px;font-size:13px;color:#2b2b2b;transform:scaleX(0.885);transform-origin:0 0;'>21</div>
<div class=t style='left:10.10px;top:597.66px;font-size:13px;color:#2b2b2b;transform:scaleX(0.885);transform-origin:0 0;'>22</div>
<div class=t style='left:10.10px;top:615.66px;font-size:13px;color:#2b2b2b;transform:scaleX(0.885);transform-origin:0 0;'>23</div>
<div class=t style='left:10.10px;top:633.66px;font-size:13px;color:#2b2b2b;transform:scaleX(0.885);transform-origin:0 0;'>24</div>
<div class=t style='left:10.10px;top:651.66px;font-size:13px;color:#2b2b2b;transform:scaleX(0.885);transform-origin:0 0;'>25</div>
<div class=t style='left:10.10px;top:669.66px;font-size:13px;color:#2b2b2b;transform:scaleX(0.885);transform-origin:0 0;'>26</div>
<div class=t style='left:10.10px;top:687.66px;font-size:13px;color:#2b2b2b;transform:scaleX(0.885);transform-origin:0 0;'>27</div>
<div class=t style='left:10.10px;top:705.66px;font-size:13px;color:#2b2b2b;transform:scaleX(0.885);transform-origin:0 0;'>28</div>
<div class=t style='left:10.10px;top:723.66px;font-size:13px;color:#2b2b2b;transform:scaleX(0.885);transform-origin:0 0;'>29</div>
<div class=t style='left:10.10px;top:741.56px;font-size:13px;color:#2b2b2b;transform:scaleX(0.885);transform-origin:0 0;'>30</div>
<div class=t style='left:31.75px;top:212.30px;font-size:12.3px;color:#35402f;transform:scaleX(0.945);transform-origin:0 0;'>MÃ SINH VIÊN</div>
<div class=t style='left:130.75px;top:212.30px;font-size:12.3px;color:#35402f;transform:scaleX(0.916);transform-origin:0 0;'>HỌ VÀ TÊN</div>
<div class=t style='left:261.25px;top:212.30px;font-size:12.3px;color:#3c3b2c;transform:scaleX(1.019);transform-origin:0 0;'>Điểm</div>
<div class=t style='left:31.75px;top:232.85px;font-size:12.3px;color:#35303a;transform:scaleX(0.916);transform-origin:0 0;'>A4K49VLHY001</div>
<div class=t style='left:303.50px;top:232.85px;font-size:12.3px;color:#2f3642;transform:scaleX(0.913);transform-origin:0 0;'>10</div>
<div class=t style='left:31.75px;top:251.90px;font-size:12.3px;color:#35303a;transform:scaleX(0.916);transform-origin:0 0;'>A4K49VLHY002</div>
<div class=t style='left:309.50px;top:251.90px;font-size:12.3px;color:#2f3642;transform:scaleX(0.950);transform-origin:0 0;'>7</div>
<div class=t style='left:31.75px;top:270.35px;font-size:12.3px;color:#35303a;transform:scaleX(0.916);transform-origin:0 0;'>A4K49VLHY003</div>
<div class=t style='left:298.50px;top:270.35px;font-size:12.3px;color:#2f3642;transform:scaleX(1.023);transform-origin:0 0;'>8.5</div>
<div class=t style='left:31.75px;top:289.85px;font-size:12.3px;color:#35303a;transform:scaleX(0.916);transform-origin:0 0;'>A4K49VLHY004</div>
<div class=t style='left:309.50px;top:289.85px;font-size:12.3px;color:#2f3642;transform:scaleX(0.950);transform-origin:0 0;'>9</div>
<div class=t style='left:31.75px;top:308.30px;font-size:12.3px;color:#35303a;transform:scaleX(0.916);transform-origin:0 0;'>A4K49VLHY005</div>
<div class=t style='left:298.50px;top:308.30px;font-size:12.3px;color:#2f3642;transform:scaleX(1.023);transform-origin:0 0;'>9.5</div>
<div class=a style='left:128px;top:227px;width:130.5px;height:20px;overflow:hidden'>
<div class=t style='left:2.75px;top:5.85px;font-size:12.3px;color:#35303a;transform:scaleX(1.029);transform-origin:0 0;'>Trần Nguyễn Minh Anh</div>
</div>
<div class=t style='left:130.75px;top:251.90px;font-size:12.3px;color:#35303a;'>Lý Minh Long</div>
<div class=t style='left:130.75px;top:270.35px;font-size:12.3px;color:#35303a;'>Đặng Ngọc Phương</div>
<div class=t style='left:130.75px;top:289.85px;font-size:12.3px;color:#35303a;transform:scaleX(1.011);transform-origin:0 0;'>Hoàng Đức Quân</div>
<div class=t style='left:130.75px;top:308.30px;font-size:12.3px;color:#35303a;transform:scaleX(1.005);transform-origin:0 0;'>Đỗ Hải Yến</div>
<div class=t style='left:382.50px;top:211.80px;font-size:12.3px;color:#2d3b48;transform:scaleX(0.945);transform-origin:0 0;'>MÃ SINH VIÊN</div>
<div class=t style='left:476.70px;top:211.80px;font-size:12.3px;color:#2d3b48;transform:scaleX(0.916);transform-origin:0 0;'>HỌ VÀ TÊN</div>
<div class=t style='left:382.50px;top:232.80px;font-size:12.3px;color:#3e2b3c;transform:scaleX(0.921);transform-origin:0 0;'>A4K49VLHY040</div>
<div class=a style='left:29px;top:225px;width:230px;height:2px;background:#7b62a8'></div>
<div class=a style='left:29px;top:322px;width:230px;height:2px;background:#7b62a8'></div>
<div class=a style='left:258px;top:227px;width:2px;height:96px;background:#7b62a8'></div>
<div class=a style='left:258px;top:208px;width:2px;height:18px;background:#b0474b'></div>
<div class=a style='left:319px;top:208px;width:2px;height:18px;background:#b0474b'></div>
<div class=a style='left:260px;top:225px;width:59px;height:2px;background:#b0474b'></div>
<div class=a style='left:319px;top:227px;width:2px;height:96px;background:#4f6fae'></div>
<div class=a style='left:260px;top:322px;width:59px;height:2px;background:#4f6fae'></div>
<div class=a style='left:257.0px;top:224.0px;width:4px;height:4px;background:#7463b5'></div>
<div class=a style='left:257.0px;top:321.0px;width:4px;height:4px;background:#7463b5'></div>
<div class=a style='left:27.0px;top:224.0px;width:4px;height:4px;background:#7b62a8'></div>
<div class=a style='left:27.0px;top:321.0px;width:4px;height:4px;background:#7b62a8'></div>
<div class=a style='left:318.0px;top:224.0px;width:4px;height:4px;background:#b0474b'></div>
<div class=a style='left:318.0px;top:321.0px;width:4px;height:4px;background:#4f6fb8'></div>
<div class=a style='left:257.0px;top:206.0px;width:4px;height:4px;background:#b0474b'></div>
<div class=a style='left:318.0px;top:206.0px;width:4px;height:4px;background:#b0474b'></div>
<svg style='left:0;top:0;opacity:.72' width=1200 height=800 viewBox='0 0 1200 800'>
<g fill=none stroke='rgb(236,108,108)' stroke-width=11>
<path d='M102.5 468V425a13 13 0 0 1 26 0V468M128.5 425a13 13 0 0 1 26 0V468' />
<path d='M165 462.8H183A12.6 12.6 0 0 0 183 437.6A12.9 12.9 0 0 1 183 411.8H239.3A25.2 25.2 0 1 1 214.1 437V432' />
</g>
<path d='M201.5 430.5L216.5 418.5L226 434.8z' fill='rgb(236,108,108)' />
<g fill=none stroke='rgb(236,108,108)' stroke-width=2.7 stroke-linejoin=bevel>
<path d='M278.5 446.5L287.3 467L296 446.5' />
<path d='M301.5 468V446.5L314.8 467V446' />
</g>
<rect x=269.8 y=464 width=3.8 height=3.8 fill='rgb(236,108,108)' />
</svg>
<div class=t style='left:269.80px;top:399.34px;font-size:14.5px;color:#8f8f8f;font-weight:700;transform:scaleX(1.058);transform-origin:0 0;-webkit-text-stroke:0;'>365</div>
<div class=t style='left:97.00px;top:475.94px;font-size:9.5px;color:#b3b3b3;transform:scaleX(0.970);transform-origin:0 0;-webkit-text-stroke:0;-webkit-text-stroke:0;'>Microsoft Cloud Solution Provider hàng đầu Việt Nam</div>
<div class=a style='left:419.85px;top:361.75px;width:407.4px;height:273.5px;background:#f9e2d7;border:1.5px solid #7f7a76'></div>
<svg style='left:0;top:0' width=1200 height=800 viewBox='0 0 1200 800'><path d='M476 543.4H812' stroke='#ebd3c6' stroke-width=1 /><path d='M476 520.8H812' stroke='#ebd3c6' stroke-width=1 /><path d='M476 498.1H812' stroke='#ebd3c6' stroke-width=1 /><path d='M476 475.4H812' stroke='#ebd3c6' stroke-width=1 /><path d='M476 452.8H812' stroke='#ebd3c6' stroke-width=1 /><path d='M476 430.1H812' stroke='#ebd3c6' stroke-width=1 /><path d='M476 407.5H812' stroke='#ebd3c6' stroke-width=1 /><rect x=476 y=407.5 width=336 height=135.89999999999998 fill=none stroke='#9a8a82' stroke-width=1.3 /><rect x=493.3 y=430.8 width=32.6 height=112.7 fill='#1a5f88' stroke='#fff' stroke-width=2 /><rect x=560.5 y=464.7 width=32.6 height=78.7 fill='#1a5f88' stroke='#fff' stroke-width=2 /><rect x=627.7 y=447.7 width=32.6 height=95.7 fill='#1a5f88' stroke='#fff' stroke-width=2 /><rect x=694.9 y=442.1 width=32.6 height=101.3 fill='#1a5f88' stroke='#fff' stroke-width=2 /><rect x=762.1 y=438.1 width=32.6 height=105.3 fill='#1a5f88' stroke='#fff' stroke-width=2 /><path d='M476.0 543.4V603' stroke='#e8d0c3' stroke-width=1 /><path d='M543.2 543.4V603' stroke='#e8d0c3' stroke-width=1 /><path d='M610.4 543.4V603' stroke='#e8d0c3' stroke-width=1 /><path d='M677.6 543.4V603' stroke='#e8d0c3' stroke-width=1 /><path d='M744.8 543.4V603' stroke='#e8d0c3' stroke-width=1 /><path d='M812.0 543.4V603' stroke='#e8d0c3' stroke-width=1 /><path d='M476 543.4H812' stroke='#a89890' stroke-width=1 /></svg>
<div class=t style='left:604.00px;top:376.04px;font-size:14.5px;color:#5e5450;transform:scaleX(1.093);transform-origin:0 0;'>Điểm</div>
<div class=t style='left:459.50px;top:538.12px;font-size:11px;color:#66605c;transform:scaleX(1.061);transform-origin:0 0;'>0</div>
<div class=t style='left:459.50px;top:515.47px;font-size:11px;color:#66605c;transform:scaleX(1.061);transform-origin:0 0;'>2</div>
<div class=t style='left:459.50px;top:492.82px;font-size:11px;color:#66605c;transform:scaleX(1.061);transform-origin:0 0;'>4</div>
<div class=t style='left:459.50px;top:470.17px;font-size:11px;color:#66605c;transform:scaleX(1.061);transform-origin:0 0;'>6</div>
<div class=t style='left:459.50px;top:447.52px;font-size:11px;color:#66605c;transform:scaleX(1.061);transform-origin:0 0;'>8</div>
<div class=t style='left:453.50px;top:424.87px;font-size:11px;color:#66605c;transform:scaleX(1.020);transform-origin:0 0;'>10</div>
<div class=t style='left:453.50px;top:402.22px;font-size:11px;color:#66605c;transform:scaleX(1.020);transform-origin:0 0;'>12</div>
<div class=t style='left:419.5px;top:469.5px;width:47px;height:11px;font-size:11px;color:#66605c;transform:rotate(-90deg);transform-origin:23.5px 5.5px;text-align:center;letter-spacing:-0.2px'>Axis Title</div>
<div class=t style='left:482.00px;top:552.36px;font-size:10.5px;color:#6f6661;transform:scaleX(0.935);transform-origin:0 0;'>Trần Nguyễn</div>
<div class=t style='left:489.30px;top:566.86px;font-size:10.5px;color:#6f6661;transform:scaleX(0.939);transform-origin:0 0;'>Minh Anh</div>
<div class=t style='left:548.50px;top:552.36px;font-size:10.5px;color:#6f6661;transform:scaleX(0.912);transform-origin:0 0;'>Lý Minh Long</div>
<div class=t style='left:616.20px;top:551.64px;font-size:12px;color:#6f6661;transform:scaleX(0.946);transform-origin:0 0;'>Đặng Ngọc</div>
<div class=t style='left:624.70px;top:565.44px;font-size:12px;color:#6f6661;transform:scaleX(0.906);transform-origin:0 0;'>Phương</div>
<div class=t style='left:686.80px;top:552.36px;font-size:10.5px;color:#6f6661;transform:scaleX(0.912);transform-origin:0 0;'>Hoàng Đức</div>
<div class=t style='left:699.25px;top:566.26px;font-size:10.5px;color:#6f6661;transform:scaleX(0.942);transform-origin:0 0;'>Quân</div>
<div class=t style='left:474.80px;top:587.42px;font-size:11px;color:#6f6661;transform:scaleX(0.855);transform-origin:0 0;'>A4K49VLHY001</div>
<div class=t style='left:542.00px;top:587.42px;font-size:11px;color:#6f6661;transform:scaleX(0.855);transform-origin:0 0;'>A4K49VLHY002</div>
<div class=t style='left:609.20px;top:587.42px;font-size:11px;color:#6f6661;transform:scaleX(0.855);transform-origin:0 0;'>A4K49VLHY003</div>
<div class=t style='left:676.40px;top:587.42px;font-size:11px;color:#6f6661;transform:scaleX(0.855);transform-origin:0 0;'>A4K49VLHY004</div>
<div class=t style='left:743.60px;top:587.42px;font-size:11px;color:#6f6661;transform:scaleX(0.855);transform-origin:0 0;'>A4K49VLHY005</div>
<div class=t style='left:622.20px;top:605.78px;font-size:11.5px;color:#66605c;transform:scaleX(0.945);transform-origin:0 0;'>Axis Title</div>
<div class=a style='left:415.1px;top:357.0px;width:11px;height:11px;border-radius:6px;background:#fff;border:2px solid #666'></div>
<div class=a style='left:618.05px;top:357.0px;width:11px;height:11px;border-radius:6px;background:#fff;border:2px solid #666'></div>
<div class=a style='left:821.0px;top:357.0px;width:11px;height:11px;border-radius:6px;background:#fff;border:2px solid #666'></div>
<div class=a style='left:415.1px;top:493.0px;width:11px;height:11px;border-radius:6px;background:#fff;border:2px solid #666'></div>
<div class=a style='left:821.0px;top:493.0px;width:11px;height:11px;border-radius:6px;background:#fff;border:2px solid #666'></div>
<div class=a style='left:415.1px;top:629.0px;width:11px;height:11px;border-radius:6px;background:#fff;border:2px solid #666'></div>
<div class=a style='left:618.05px;top:629.0px;width:11px;height:11px;border-radius:6px;background:#fff;border:2px solid #666'></div>
<div class=a style='left:821.0px;top:629.0px;width:11px;height:11px;border-radius:6px;background:#fff;border:2px solid #666'></div>
<div class=a style='left:470.5px;top:402.0px;width:11px;height:11px;border-radius:6px;background:#fff;border:2px solid #666'></div>
<div class=a style='left:638.5px;top:402.0px;width:11px;height:11px;border-radius:6px;background:#fff;border:2px solid #666'></div>
<div class=a style='left:806.5px;top:402.0px;width:11px;height:11px;border-radius:6px;background:#fff;border:2px solid #666'></div>
<div class=a style='left:470.5px;top:469.95px;width:11px;height:11px;border-radius:6px;background:#fff;border:2px solid #666'></div>
<div class=a style='left:806.5px;top:469.95px;width:11px;height:11px;border-radius:6px;background:#fff;border:2px solid #666'></div>
<div class=a style='left:470.5px;top:537.9px;width:11px;height:11px;border-radius:6px;background:#fff;border:2px solid #666'></div>
<div class=a style='left:638.5px;top:537.9px;width:11px;height:11px;border-radius:6px;background:#fff;border:2px solid #666'></div>
<div class=a style='left:806.5px;top:537.9px;width:11px;height:11px;border-radius:6px;background:#fff;border:2px solid #666'></div>
<div class=a style='left:838.75px;top:361.25px;width:26px;height:26px;background:#fff;border:1.3px solid #8a8a8a'></div>
<div class=a style='left:838.75px;top:397.25px;width:26px;height:26px;background:#fff;border:1.3px solid #8a8a8a'></div>
<div class=a style='left:838.75px;top:433px;width:26px;height:26px;background:#fff;border:1.3px solid #8a8a8a'></div>
<svg style='left:843px;top:366px' width=18 height=18 viewBox='0 0 18 18'><path d='M9 2v14M2 9h14' stroke='#4e9b7b' stroke-width=3.2 /></svg>
<svg style='left:843px;top:401px' width=18 height=18 viewBox='0 0 18 18'><path d='M16 1.5L10 9' stroke='#555' stroke-width=2.5 /><path d='M9.5 8.5c-2 0-3 1-4 3s-2 4-4 4.5c3 .5 6 0 7.5-2s1.5-3 .5-5.5z' fill='#3f6f95' /></svg>
<div class=a style='left:751.5px;top:436.5px;width:187px;height:62px;background:#fff;border:1px solid #e3e3e3;box-shadow:0 0 6px rgba(0,0,0,.16)'></div>
<svg style='left:762px;top:441px' width=28 height=26 viewBox='0 0 28 26'>
<path d='M6 12.5l7-7 7.5 7.5-7.5 7z' fill='#fff' stroke='#555' stroke-width=1.1 />
<path d='M10.5 2.5h4.5v6' fill=none stroke='#666' stroke-width=1.1 /><path d='M10.5 2.5v4' fill=none stroke='#666' stroke-width=1.1 />
<circle cx=14.2 cy=8.8 r=1 fill='#555' />
<path d='M18 7c3.5 1 4.5 4.5 3 8' fill=none stroke='#3d79a8' stroke-width=2.4 />
<rect x=2 y=19 width=22.5 height=5.5 fill='#e5772e' />
</svg>
<svg style='left:787px;top:451px' width=8 height=5 viewBox='0 0 8 5'><path d='M1 1l3 3 3-3' fill=none stroke='#444' stroke-width=1.3 /></svg>
<svg style='left:804px;top:441px' width=28 height=26 viewBox='0 0 28 26'>
<path d='M5.5 17V3h12' fill=none stroke='#555' stroke-width=1.1 />
<path d='M5.5 17h3' stroke='#555' stroke-width=1.1 />
<path d='M22.5 1.5l2.5 2.5-12 12-3.5 1 1-3.5z' fill='#3d7cb8' stroke='#2d5f90' stroke-width=.8 />
<rect x=2 y=19 width=22.5 height=5.5 fill='#1e5f88' />
</svg>
<svg style='left:830px;top:451px' width=8 height=5 viewBox='0 0 8 5'><path d='M1 1l3 3 3-3' fill=none stroke='#444' stroke-width=1.3 /></svg>
<div class=t style='left:768.00px;top:474.78px;font-size:11.5px;color:#333;transform:scaleX(0.952);transform-origin:0 0;'>Fill</div>
<div class=t style='left:799.00px;top:474.78px;font-size:11.5px;color:#333;'>Outline</div>
<div class=a style='left:840.5px;top:456.5px;width:94px;height:22px;background:#fff;border:1px solid #9a9a9a'></div>
<div class=t style='left:844.00px;top:462.22px;font-size:11px;color:#262626;transform:scaleX(1.019);transform-origin:0 0;'>Plot Area</div>
<svg style='left:922.5px;top:464.5px' width=9 height=6 viewBox='0 0 9 6'><path d='M0.5 0.5h8L4.5 5z' fill='#333' /></svg>
<div class=a style='left:751.5px;top:514.5px;width:160px;height:170px;background:#fff;border:1px solid #b5b5b5;box-shadow:1px 1px 3px rgba(0,0,0,.15)'></div>
<div class=a style='left:783px;top:561px;width:125px;height:1px;background:#e1e1e1'></div>
<div class=a style='left:751px;top:650px;width:161.5px;height:35px;background:#d9d9d9;border:5.5px solid #e03b3f'></div>
<div class=t style='left:783.70px;top:521.78px;font-size:11.3px;color:#262626;transform:scaleX(0.949);transform-origin:0 0;'>Delete</div>
<div class=t style='left:783.70px;top:544.28px;font-size:11.3px;color:#262626;transform:scaleX(0.974);transform-origin:0 0;'>Reset to Match Style</div>
<div class=t style='left:783.70px;top:569.33px;font-size:11.3px;color:#262626;transform:scaleX(0.970);transform-origin:0 0;'>Change Chart Type...</div>
<div class=t style='left:783.70px;top:592.08px;font-size:11.3px;color:#262626;transform:scaleX(0.944);transform-origin:0 0;'>Save as Template...</div>
<div class=t style='left:783.70px;top:614.58px;font-size:11.3px;color:#262626;transform:scaleX(0.929);transform-origin:0 0;'>Select Data...</div>
<div class=t style='left:783.70px;top:637.83px;font-size:11.3px;color:#b8b8b8;transform:scaleX(0.975);transform-origin:0 0;-webkit-text-stroke:0;'>3-D Rotation...</div>
<div class=t style='left:783.70px;top:662.58px;font-size:11.3px;color:#262626;transform:scaleX(0.987);transform-origin:0 0;'>Format Plot Area...</div>
<div class=a style='left:783.7px;top:532.5px;width:8px;height:1px;background:#262626'></div>
<div class=a style='left:835px;top:555px;width:6.5px;height:1px;background:#262626'></div>
<div class=a style='left:858px;top:580.5px;width:6px;height:1px;background:#262626'></div>
<div class=a style='left:783.7px;top:603px;width:7px;height:1px;background:#262626'></div>
<div class=a style='left:793.5px;top:625.5px;width:6.5px;height:1px;background:#262626'></div>
<div class=a style='left:806.5px;top:648.5px;width:7px;height:1px;background:#c0c0c0'></div>
<div class=a style='left:783.7px;top:673.5px;width:7px;height:1px;background:#262626'></div>
<svg style='left:756px;top:542px' width=17 height=15 viewBox='0 0 17 15'>
<rect x=5.5 y=4.5 width=10.5 height=10 fill='#fff' stroke='#555' stroke-width=1 />
<path d='M5.5 8h10.5M5.5 11.3h10.5M9 4.5v10' stroke='#666' stroke-width=.9 />
<path d='M9 2.5C6 1 3 2 2 5' fill=none stroke='#2f77b8' stroke-width=1.5 />
<path d='M0.5 3.5L2 6.5 4.8 4.8' fill=none stroke='#2f77b8' stroke-width=1.3 />
</svg>
<svg style='left:757px;top:567px' width=15 height=14 viewBox='0 0 15 14'>
<rect x=1 y=6 width=3.5 height=8 fill='#3b78b4' /><rect x=5.8 y=1.5 width=3.5 height=12.5 fill='#e2b96a' /><rect x=10.5 y=4 width=3.5 height=10 fill='#777' />
</svg>
<svg style='left:757px;top:589px' width=16 height=16 viewBox='0 0 16 16'>
<rect x=1 y=6 width=3.5 height=9 fill='#3b78b4' /><rect x=6 y=1 width=3 height=5 fill='#e2b96a' />
<rect x=5.5 y=5 width=10 height=10.5 fill='#7d4cb0' /><rect x=8 y=6.5 width=5 height=3 fill='#fff' /><rect x=8 y=11.5 width=5 height=2.5 fill='#fff' />
</svg>
<svg style='left:756px;top:612px' width=17 height=16 viewBox='0 0 17 16'>
<rect x=1 y=1 width=12 height=10 fill='#fff' stroke='#555' stroke-width=1 />
<path d='M1 4h12M1 7.5h12M5 1v10' stroke='#666' stroke-width=.9 />
<rect x=8.5 y=8 width=7.5 height=7.5 fill='#fff' stroke='#555' stroke-width=1 />
<path d='M10.5 13.5l4-4' stroke='#777' stroke-width=1.2 />
</svg>
<svg style='left:757px;top:635px' width=15 height=16 viewBox='0 0 15 16'>
<path d='M2 3.5a5.5 2 0 0 1 11 0V13a5.5 2 0 0 1 -11 0z' fill='#f4f4f4' stroke='#d4d4d4' stroke-width=1.2 />
</svg>
<svg style='left:755px;top:657px' width=20 height=22 viewBox='0 0 20 22'>
<path d='M3 9l5-5 5 5-5 5z' fill='#fff' stroke='#5a5a5a' stroke-width=1 />
<path d='M6.5 5V2.3a1.3 1.3 0 0 1 2.6 0V7' fill=none stroke='#5a5a5a' stroke-width=.9 />
<path d='M9 19l8-9' stroke='#2f6e96' stroke-width=2.5 />
<path d='M4 17c2-1 3-3 5-3s1 4-2 5' fill='#3b8fb3' />
</svg>
<div class=a style='left:5px;top:754px;width:1188px;height:26px;background:#e6e6e6'></div>
<div class=a style='left:5px;top:753.5px;width:1168px;height:1px;background:#a8a8a8'></div>
<svg style='left:34px;top:760px' width=6 height=10 viewBox='0 0 6 10'><path d='M5 1L1 5l4 4z' fill='#c4c4c4' /></svg>
<svg style='left:56px;top:760px' width=6 height=10 viewBox='0 0 6 10'><path d='M1 1l4 4-4 4z' fill='#c4c4c4' /></svg>
<div class=a style='left:99.5px;top:753.5px;width:92px;height:22px;background:#fff;border-left:1px solid #bcbcbc;border-right:1px solid #bcbcbc'></div>
<div class=a style='left:100px;top:773.5px;width:91.5px;height:2.5px;background:#217346'></div>
<div class=t style='left:111.50px;top:760.24px;font-size:12px;color:#217346;font-weight:700;transform:scaleX(1.014);transform-origin:0 0;'>Trang_tính1</div>
<svg style='left:222.5px;top:758.5px' width=16 height=16 viewBox='0 0 16 16'><circle cx=8 cy=8 r=6.8 fill=none stroke='#666' stroke-width=1.2 /><path d='M8 4.5v7M4.5 8h7' stroke='#666' stroke-width=1.3 /></svg>
<div class=a style='left:717.5px;top:762px;width:2px;height:2px;background:#b5b5b5'></div>
<div class=a style='left:717.5px;top:766px;width:2px;height:2px;background:#b5b5b5'></div>
<div class=a style='left:717.5px;top:770px;width:2px;height:2px;background:#b5b5b5'></div>
<div class=a style='left:734px;top:760px;width:439px;height:14px;background:#fff;border:1px solid #9c9c9c'></div>
<div class=a style='left:1120.5px;top:761px;width:38.5px;height:12px;background:#e9e9e9'></div>
<div class=a style='left:1120px;top:760px;width:1px;height:14px;background:#9c9c9c'></div>
<div class=a style='left:1159px;top:760px;width:1px;height:14px;background:#9c9c9c'></div>
<div class=a style='left:748px;top:760px;width:1px;height:14px;background:#9c9c9c'></div>
<svg style='left:738.5px;top:763px' width=6 height=9 viewBox='0 0 6 9'><path d='M5 0.5L0.5 4.5 5 8.5z' fill='#222' /></svg>
<svg style='left:1164px;top:763px' width=6 height=9 viewBox='0 0 6 9'><path d='M1 0.5l4.5 4-4.5 4z' fill='#222' /></svg>
<div class=a style='left:1173px;top:189px;width:20px;height:565px;background:#e6e6e6'></div>
<div class=a style='left:1176px;top:191px;width:14px;height:529px;background:#fff;border:1px solid #9c9c9c'></div>
<div class=a style='left:1176px;top:205px;width:14px;height:1px;background:#9c9c9c'></div>
<div class=a style='left:1176px;top:740px;width:14px;height:13.5px;background:#fff;border:1px solid #9c9c9c'></div>
<svg style='left:1178.5px;top:195px' width=9 height=6 viewBox='0 0 9 6'><path d='M0.5 5.5L4.5 1l4 4.5z' fill='#222' /></svg>
<svg style='left:1178.5px;top:744px' width=9 height=6 viewBox='0 0 9 6'><path d='M0.5 0.5h8L4.5 5z' fill='#222' /></svg>
<div class=a style='left:5px;top:780px;width:1188px;height:20px;background:#f3f3f3'></div>
<div class=a style='left:5px;top:779.5px;width:1188px;height:1px;background:#dadada'></div>
<div class=t style='left:15.50px;top:785.08px;font-size:11.3px;color:#3b3b3b;transform:scaleX(0.888);transform-origin:0 0;'>Ready</div>
<div class=t style='left:60.00px;top:785.08px;font-size:11.3px;color:#3b3b3b;transform:scaleX(0.982);transform-origin:0 0;'>Filter Mode</div>
<svg style='left:146px;top:782px' width=17 height=16 viewBox='0 0 17 16'><path d='M8 1.5a6 6 0 1 0 3 11' fill=none stroke='#555' stroke-width=1.2 stroke-dasharray='2 1.3' /><circle cx=9 cy=3.3 r=1.3 fill='#444' /><path d='M5 7l4-1 3 1M9 6v4l-3 5M9 10l4 5' fill=none stroke='#333' stroke-width=1.4 /><path d='M11 10l5 5M16 10l-5 5' stroke='#333' stroke-width=1.4 /></svg>
<div class=t style='left:165.50px;top:784.58px;font-size:11.3px;color:#2a2a2a;font-weight:700;transform:scaleX(0.881);transform-origin:0 0;'>Accessibility: Investigate</div>
<div class=a style='left:898.5px;top:780px;width:37.5px;height:20px;background:#d6d6d6'></div>
<svg style='left:911px;top:782.5px' width=14 height=13 viewBox='0 0 14 13'><rect x=.6 y=.6 width=12.8 height=11.8 fill=none stroke='#666' stroke-width=1 /><path d='M.6 4.5h12.8M.6 8.5h12.8M4.8 .6v11.8M9.2 .6v11.8' stroke='#666' stroke-width=1 /></svg>
<svg style='left:947px;top:782.5px' width=14 height=13 viewBox='0 0 14 13'><rect x=.6 y=.6 width=12.8 height=11.8 fill=none stroke='#666' stroke-width=1 /><rect x=3 y=2.5 width=8 height=8 fill=none stroke='#666' stroke-width=.9 /><path d='M4.5 5h5M4.5 7h5M4.5 9h5' stroke='#777' stroke-width=.7 /></svg>
<svg style='left:986px;top:782.5px' width=14 height=13 viewBox='0 0 14 13'><path d='M.6 .6v11.8h12.8V.6M.6 6.5h12.8M5 .6v6M9 .6v6' fill=none stroke='#666' stroke-width=1 /></svg>
<div class=a style='left:1017.5px;top:789.5px;width:7px;height:1.2px;background:#555'></div>
<div class=a style='left:1030px;top:790px;width:95px;height:1px;background:#555'></div>
<div class=a style='left:1075px;top:784px;width:4.5px;height:12px;background:#444'></div>
<svg style='left:1128.5px;top:785px' width=10 height=10 viewBox='0 0 10 10'><path d='M5 0.5v9M0.5 5h9' stroke='#555' stroke-width=1.1 /></svg>
<div class=t style='left:1150.00px;top:785.08px;font-size:11.3px;color:#3b3b3b;transform:scaleX(0.882);transform-origin:0 0;'>100%</div>
</body></html>
